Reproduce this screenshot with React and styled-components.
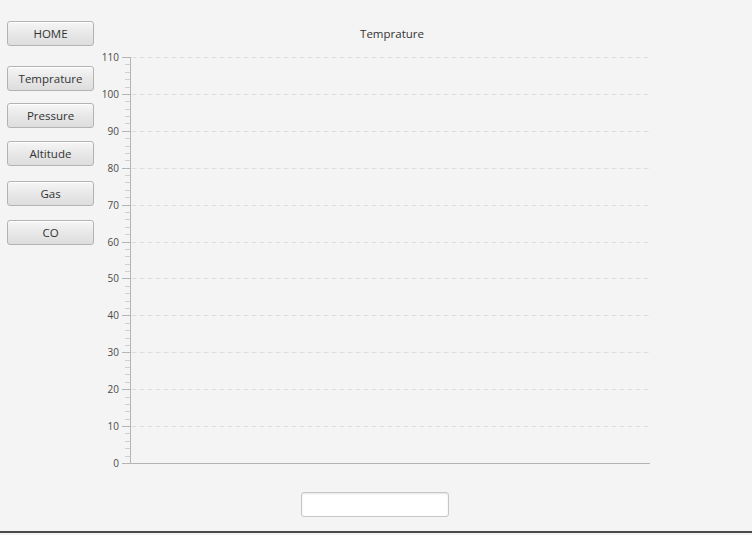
import React from 'react';
import styled, { createGlobalStyle } from 'styled-components';

const GlobalStyle = createGlobalStyle`
  html, body {
    margin: 0;
    padding: 0;
    background: #f4f4f4;
  }
  body {
    font-family: "Open Sans", "Noto Sans", Arial, sans-serif;
  }
`;

const buttons = [
  { label: 'HOME', gap: 21 },
  { label: 'Temprature', gap: 20 },
  { label: 'Pressure', gap: 12 },
  { label: 'Altitude', gap: 13 },
  { label: 'Gas', gap: 15 },
  { label: 'CO', gap: 14 },
];

// plot geometry inside the svg
const AX = 30.5;
const TOP = 7;
const BOTTOM = 413;
const RIGHT = 550;
const MAX = 110;

const Chart = () => {
  const step = (BOTTOM - TOP) / 11;
  const majors = [];
  for (let v = 0; v <= MAX; v += 10) majors.push(v);
  const minors = [];
  for (let i = 0; i < 55; i++) {
    if (i % 5 !== 0) minors.push(BOTTOM - (i * step) / 5);
  }

  return (
    <svg width="584" height="420" style={{ display: 'block' }}>
      {majors.map((v) => {
        const y = Math.round(BOTTOM - (v / 10) * step) + 0.5;
        return (
          <g key={v}>
            {v > 0 && (
              <line x1={AX + 1} x2={RIGHT} y1={y} y2={y} stroke="#dedede" strokeDasharray="5 3" />
            )}
            <line x1={22} x2={AX} y1={y} y2={y} stroke="#b4b4b4" />
            <text
              x={19}
              y={y + 3.5}
              textAnchor="end"
              fontSize="10"
              fill="#4a4a4a"
              fontFamily='"Open Sans", "Noto Sans", sans-serif'
            >
              {v}
            </text>
          </g>
        );
      })}
      {minors.map((y, i) => (
        <line key={i} x1={25} x2={AX} y1={Math.round(y) + 0.5} y2={Math.round(y) + 0.5} stroke="#cfcfcf" />
      ))}
      <line x1={AX} x2={AX} y1={TOP} y2={BOTTOM + 0.5} stroke="#b4b4b4" />
      <line x1={AX} x2={RIGHT} y1={BOTTOM + 0.5} y2={BOTTOM + 0.5} stroke="#b4b4b4" />
    </svg>
  );
};

const App = () => {
  return (
    <>
      <GlobalStyle />
      <Window>
        <Sidebar>
          {buttons.map((b) => (
            <NavButton key={b.label} $gap={b.gap}>
              {b.label}
            </NavButton>
          ))}
        </Sidebar>
        <Main>
          <Title>Temprature</Title>
          <Chart />
          <Footer>
            <Field type="text" />
          </Footer>
        </Main>
      </Window>
    </>
  );
};

export default App;

const Window = styled.div`
  height: 531px;
  display: flex;
  border-bottom: 2px solid #4b4b4b;
  background: #f4f4f4;
`;

const Sidebar = styled.div`
  width: 100px;
  padding-left: 7px;
  box-sizing: border-box;
  display: flex;
  flex-direction: column;
`;

const NavButton = styled.button`
  margin-top: ${(p) => p.$gap}px;
  width: 87px;
  height: 25px;
  padding: 0;
  border: 1px solid #b3b3b3;
  border-radius: 3px;
  background: linear-gradient(to bottom, #f6f6f6 0%, #e8e8e8 50%, #dddddd 100%);
  box-shadow: inset 0 1px 0 #ffffff;
  font-family: "Open Sans", "Noto Sans", Arial, sans-serif;
  font-size: 11.5px;
  color: #333;
  cursor: pointer;
`;

const Main = styled.div`
  display: flex;
  flex-direction: column;
  padding-top: 26px;
`;

const Title = styled.div`
  width: 584px;
  text-align: center;
  font-size: 11.5px;
  line-height: 16px;
  height: 16px;
  margin-bottom: 8px;
  color: #333;
`;

const Footer = styled.div`
  padding-top: 22px;
  padding-left: 201px;
`;

const Field = styled.input`
  display: block;
  width: 148px;
  height: 25px;
  box-sizing: border-box;
  border: 1px solid #c6c6c6;
  border-radius: 3px;
  background: #fff;
  box-shadow: inset 0 1px 2px #e4e4e4;
  outline: none;
`;
